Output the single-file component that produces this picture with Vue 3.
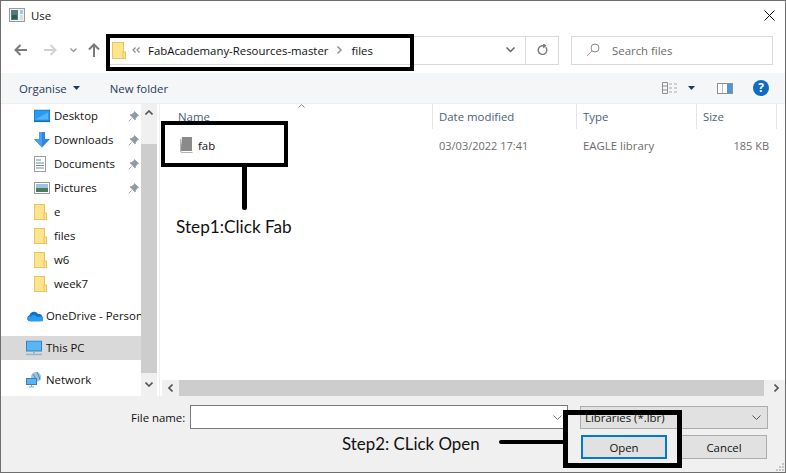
<script setup>
const places = [
  { name: 'Desktop', icon: 'desktop', pin: true },
  { name: 'Downloads', icon: 'down', pin: true },
  { name: 'Documents', icon: 'doc', pin: true },
  { name: 'Pictures', icon: 'pic', pin: true },
  { name: 'e', icon: 'folder' },
  { name: 'files', icon: 'folder' },
  { name: 'w6', icon: 'folder' },
  { name: 'week7', icon: 'folder' }
]
</script>

<template>
  <div class="win">
    <header class="title">
      <svg class="appicon" width="16" height="16" viewBox="0 0 16 16">
        <rect x="0.5" y="1.5" width="15" height="13" fill="#f2f2f2" stroke="#9a9a9a" />
        <rect x="2" y="3" width="7" height="10" fill="#4f7f78" />
        <rect x="3" y="8" width="5" height="4" fill="#2d5a52" />
        <rect x="11" y="3" width="3" height="4" fill="#a8c8d8" />
        <rect x="11" y="8" width="3" height="5" fill="#dcdcdc" />
      </svg>
      <span>Use</span>
      <svg class="close" width="11" height="11" viewBox="0 0 11 11">
        <path d="M0.5 0.5L10.5 10.5M10.5 0.5L0.5 10.5" stroke="#111" stroke-width="1" fill="none" />
      </svg>
    </header>

    <nav class="nav">
      <div class="navbtns">
        <svg width="13" height="12" viewBox="0 0 13 12"><path d="M13 6H2M6.5 1L1.5 6L6.5 11" fill="none" stroke="#7a7a7a" stroke-width="2" /></svg>
        <svg class="fwd" width="13" height="12" viewBox="0 0 13 12"><path d="M0 6H11M6.5 1L11.5 6L6.5 11" fill="none" stroke="#d2d2d2" stroke-width="2" /></svg>
        <svg class="hist" width="7" height="5" viewBox="0 0 7 5"><path d="M0.5 0.5L3.5 3.5L6.5 0.5" fill="none" stroke="#9a9a9a" stroke-width="1.4" /></svg>
        <svg class="up" width="12" height="14" viewBox="0 0 12 14"><path d="M6 14V2M1 6.5L6 1.5L11 6.5" fill="none" stroke="#7a7a7a" stroke-width="2" /></svg>
      </div>
      <div class="addr">
        <svg class="addrfolder" width="14" height="17" viewBox="0 0 14 17"><rect x="0.5" y="0.5" width="11" height="16" fill="#fde58f" stroke="#e8c65e" /><rect x="11" y="10" width="2.5" height="6.5" fill="#fde58f" stroke="#e8c65e" /></svg>
        <svg class="chev" width="8" height="6" viewBox="0 0 8 6"><path d="M3.5 0.5L1 3L3.5 5.5M7.5 0.5L5 3L7.5 5.5" fill="none" stroke="#8a8a8a" stroke-width="1.2" /></svg>
        <span class="crumb">FabAcademany-Resources-master</span>
        <svg class="sep" width="5" height="8" viewBox="0 0 5 8"><path d="M0.5 0.5L4 4L0.5 7.5" fill="none" stroke="#888" stroke-width="1.4" /></svg>
        <span class="crumb">files</span>
        <svg class="addrdrop" width="9" height="6" viewBox="0 0 9 6"><path d="M0.5 0.5L4.5 4.5L8.5 0.5" fill="none" stroke="#666" stroke-width="1.5" /></svg>
        <div class="refresh">
          <svg width="11" height="12" viewBox="0 0 11 12"><path d="M8.7 3.2A4.3 4.3 0 1 1 5 1.8H8M6.2 0L8.4 1.8L6.2 3.6" fill="none" stroke="#7a7a7a" stroke-width="1.4" /></svg>
        </div>
      </div>
      <div class="search">
        <svg width="14" height="14" viewBox="0 0 14 14"><circle cx="9" cy="5" r="4" fill="none" stroke="#8a8a8a" /><path d="M6 8L1 13" stroke="#b48a9a" /></svg>
        <span>Search files</span>
      </div>
    </nav>

    <div class="tools">
      <span class="tool">Organise</span>
      <svg class="caret" width="7" height="4" viewBox="0 0 7 4"><path d="M0 0H7L3.5 4Z" fill="#1e3a5f" /></svg>
      <span class="tool newf">New folder</span>
      <div class="toolright">
        <svg width="16" height="12" viewBox="0 0 16 12">
          <path d="M0.5 0.5H5.5V11.5H0.5Z M0.5 4H5.5 M0.5 8H5.5" fill="none" stroke="#8f8f8f" />
          <path d="M7 2H10M12 2H15M7 6H10M12 6H15M7 10H10M12 10H15" stroke="#a8a8a8" />
        </svg>
        <svg class="viewcaret" width="7" height="4" viewBox="0 0 7 4"><path d="M0 0H7L3.5 4Z" fill="#1e3a5f" /></svg>
        <svg class="pane" width="16" height="11" viewBox="0 0 16 11"><rect x="0.5" y="0.5" width="15" height="10" fill="#fff" stroke="#8f8f8f" /><rect x="10" y="1" width="5" height="9" fill="#4a97e0" /><path d="M5.5 1V10" stroke="#bbb" /></svg>
        <span class="help">?</span>
      </div>
    </div>

    <main class="body">
      <aside class="side">
        <ul class="places">
          <li v-for="p in places" :key="p.name" class="place">
            <svg v-if="p.icon === 'desktop'" width="16" height="13" viewBox="0 0 16 13"><rect x="0" y="0.5" width="16" height="11" fill="#2a9bf0" stroke="#0f74c8" /><path d="M1 10L14 3V10Z" fill="#54b5f7" /><rect x="0" y="11.5" width="16" height="1.2" fill="#1a6fb5" /></svg>
            <svg v-else-if="p.icon === 'down'" width="16" height="16" viewBox="0 0 16 16"><path d="M5 0H11V7H16L8 15.5L0 7H5Z" fill="#2f86e0" /><path d="M5 0H8V15.5L0 7H5Z" fill="#4aa0ee" /></svg>
            <svg v-else-if="p.icon === 'doc'" width="12" height="16" viewBox="0 0 12 16"><rect x="0.5" y="0.5" width="11" height="15" fill="#fff" stroke="#9a9a9a" /><path d="M2 4H7M2 7H10M2 9.5H10M2 12H10" stroke="#6d8fb0" /></svg>
            <svg v-else-if="p.icon === 'pic'" width="16" height="12" viewBox="0 0 16 12"><rect x="0.5" y="0.5" width="15" height="11" fill="#fff" stroke="#9a9a9a" /><rect x="2" y="2" width="12" height="4" fill="#9cc4de" /><rect x="2" y="6" width="12" height="4" fill="#4f7a5e" /></svg>
            <svg v-else width="13" height="16" viewBox="0 0 13 16"><rect x="0.5" y="0.5" width="10" height="15" fill="#fde58f" stroke="#e8c65e" /><rect x="10" y="9" width="2.5" height="6.5" fill="#fde58f" stroke="#e8c65e" /></svg>
            <span class="pname">{{ p.name }}</span>
            <svg v-if="p.pin" class="pin" width="11" height="11" viewBox="0 0 11 11"><path d="M6.5 0.5L10.5 4.5L9 5L7.5 7.5L7.2 9L2 3.8L3.5 3.5L6 2Z M3.5 7.5L0.5 10.5" fill="#8f9aa3" stroke="#8f9aa3" stroke-width="0.8" /></svg>
          </li>
          <li class="place top sys">
            <svg width="17" height="11" viewBox="0 0 17 11"><path d="M4 11A3.2 3.2 0 0 1 3.5 4.8A4.6 4.6 0 0 1 12 3.5A3.8 3.8 0 0 1 13.5 11Z" fill="#0f72c6" /><path d="M1 9A3 3 0 0 1 5 6A3.5 3.5 0 0 1 11 6.5H13.5A2.4 2.4 0 0 1 16 11H4Z" fill="#2a9bf0" /></svg>
            <span class="pname">OneDrive - Personal</span>
          </li>
          <li class="place pc sys">
            <svg width="16" height="15" viewBox="0 0 16 15"><rect x="0.5" y="0.5" width="15" height="10" fill="#54b8f8" stroke="#3d7fb0" /><path d="M7 11H9V13H7Z" fill="#9bb0c0" /><path d="M0 14H16" stroke="#9bb0c0" stroke-width="1.4" /></svg>
            <span class="pname">This PC</span>
          </li>
          <li class="place net sys">
            <svg width="16" height="16" viewBox="0 0 16 16"><circle cx="10" cy="5" r="5" fill="#9cc4de" /><path d="M7 2Q10 5 9 9M11 0Q13 4 14 8" stroke="#4f86b0" fill="none" /><rect x="0.5" y="6.5" width="10" height="6" fill="#54b8f8" stroke="#3d7fb0" /><path d="M3 15H8M5.5 13V15" stroke="#8ea8bc" /></svg>
            <span class="pname">Network</span>
          </li>
        </ul>
        <div class="vbar">
          <svg class="arrow" width="8" height="5" viewBox="0 0 8 5"><path d="M0.5 4.5L4 1L7.5 4.5" fill="none" stroke="#555" stroke-width="1.6" /></svg>
          <div class="vthumb"></div>
          <svg class="arrow" width="8" height="5" viewBox="0 0 8 5"><path d="M0.5 0.5L4 4L7.5 0.5" fill="none" stroke="#555" stroke-width="1.6" /></svg>
        </div>
      </aside>

      <section class="list">
        <div class="heads">
          <div class="head h1">Name
            <svg class="sort" width="7" height="4" viewBox="0 0 7 4"><path d="M0.5 3.5L3.5 0.5L6.5 3.5" fill="none" stroke="#888" /></svg>
          </div>
          <div class="head h2">Date modified</div>
          <div class="head h3">Type</div>
          <div class="head h4">Size</div>
        </div>
        <div class="row">
          <div class="cell h1 fname">
            <svg width="13" height="16" viewBox="0 0 13 16"><path d="M2 0H12V14H2Q0.5 14 0.5 15Z" fill="#8a8a8a" /><path d="M0.5 2V14.5Q0.5 15.5 2 15.5H12.5" fill="none" stroke="#b5b5b5" /></svg>
            <span>fab</span>
          </div>
          <div class="cell h2 muted num">03/03/2022 17:41</div>
          <div class="cell h3 muted">EAGLE library</div>
          <div class="cell h4 muted right num">185 KB</div>
        </div>
        <div class="spacer"></div>
        <div class="hbar">
          <svg class="harrow" width="5" height="8" viewBox="0 0 5 8"><path d="M4.5 0.5L1 4L4.5 7.5" fill="none" stroke="#555" stroke-width="1.6" /></svg>
          <div class="hthumb"></div>
          <svg class="harrow" width="5" height="8" viewBox="0 0 5 8"><path d="M0.5 0.5L4 4L0.5 7.5" fill="none" stroke="#555" stroke-width="1.6" /></svg>
        </div>
      </section>
    </main>

    <footer class="foot">
      <div class="frow">
        <label class="flabel">File name:</label>
        <div class="finput">
          <svg width="9" height="5" viewBox="0 0 9 5"><path d="M0.5 0.5L4.5 4.5L8.5 0.5" fill="none" stroke="#777" /></svg>
        </div>
        <div class="filter">
          <span>Libraries (*.lbr)</span>
          <svg width="9" height="5" viewBox="0 0 9 5"><path d="M0.5 0.5L4.5 4.5L8.5 0.5" fill="none" stroke="#555" /></svg>
        </div>
      </div>
      <div class="brow">
        <button class="btn primary">Open</button>
        <button class="btn">Cancel</button>
      </div>
      <svg class="grip" width="9" height="9" viewBox="0 0 9 9"><path d="M7 1h2v2H7zM4 4h2v2H4zM7 4h2v2H7zM1 7h2v2H1zM4 7h2v2H4zM7 7h2v2H7z" fill="#c4c4c4" /></svg>
    </footer>

    <div class="mark m-addr"></div>
    <div class="mark m-fab"></div>
    <div class="stem"></div>
    <div class="note n1">Step1:Click Fab</div>
    <div class="note n2">Step2: CLick Open</div>
    <div class="link"></div>
    <div class="mark m-open"></div>
  </div>
</template>

<style scoped>
.win {
  position: relative;
  width: 786px;
  height: 473px;
  box-sizing: border-box;
  border: 1px solid #6e6e6e;
  background: #fff;
  font: 11.4px "Open Sans", "Noto Sans", sans-serif;
  color: #111;
  display: flex;
  flex-direction: column;
  overflow: hidden;
}
.title {
  height: 28px;
  flex: none;
  display: flex;
  align-items: center;
  padding-left: 8px;
  gap: 6px;
}
.close { margin-left: auto; margin-right: 10px; }
.nav {
  height: 44px;
  flex: none;
  display: flex;
  align-items: center;
  padding-bottom: 2px;
  box-sizing: border-box;
}
.navbtns {
  width: 106px;
  flex: none;
  display: flex;
  align-items: center;
  padding-left: 13px;
  box-sizing: border-box;
}
.fwd { margin-left: 17px; }
.hist { margin-left: 13px; }
.up { margin-left: 11px; }
.addr {
  width: 453px;
  height: 29px;
  box-sizing: border-box;
  border: 1px solid #d9d9d9;
  flex: none;
  margin-left: -1px;
  display: flex;
  align-items: center;
  padding-left: 5px;
}
.addrfolder { flex: none; }
.chev { margin-left: 6px; flex: none; }
.crumb { margin-left: 8px; }
.sep { margin-left: 9px; margin-right: 1px; }
.addrdrop { margin-left: auto; margin-right: 10px; }
.refresh {
  width: 32px;
  height: 27px;
  border-left: 1px solid #d9d9d9;
  display: flex;
  align-items: center;
  justify-content: center;
  flex: none;
}
.search {
  width: 202px;
  height: 29px;
  margin-left: 12px;
  box-sizing: border-box;
  border: 1px solid #d9d9d9;
  display: flex;
  align-items: center;
  padding-left: 14px;
  gap: 12px;
  color: #6d6d6d;
}
.tools {
  height: 30px;
  flex: none;
  background: #f5f6f7;
  border-bottom: 1px solid #eeeeee;
  box-sizing: content-box;
  display: flex;
  align-items: center;
  padding-left: 18px;
  color: #1e3a5f;
}
.caret { margin-left: 6px; }
.newf { margin-left: 30px; }
.toolright {
  margin-left: auto;
  display: flex;
  align-items: center;
  padding-right: 16px;
}
.viewcaret { margin-left: 10px; }
.pane { margin-left: 22px; }
.help {
  width: 16px;
  height: 16px;
  margin-left: 20px;
  border-radius: 50%;
  background: #0f6cc4;
  color: #fff;
  font-weight: 700;
  font-size: 12px;
  line-height: 16px;
  text-align: center;
}
.body {
  flex: 1;
  min-height: 0;
  display: flex;
}
.side {
  width: 159px;
  flex: none;
  display: flex;
  border-right: 1px solid #f0f0f0;
  box-sizing: border-box;
}
.places {
  list-style: none;
  margin: 0;
  padding: 0;
  width: 140px;
  flex: none;
  overflow: hidden;
}
.place {
  height: 24px;
  display: flex;
  align-items: center;
  padding-left: 32px;
  padding-bottom: 1px;
  width: 140px;
  box-sizing: border-box;
  position: relative;
  white-space: nowrap;
  overflow: hidden;
}
.place svg:first-child { position: absolute; left: 33px; top: 50%; transform: translateY(-50%); }
.pname { margin-left: 21px; }
.sys { padding-left: 24px; }
.sys svg:first-child { left: 25px; }
.top { margin-top: 8px; }
.pc { margin-top: 8px; background: #d9d9d9; }
.net { margin-top: 8px; }
.pin { position: absolute; right: 2px; top: 7px; }
.vbar {
  width: 16px;
  flex: none;
  background: #f0f0f0;
  display: flex;
  flex-direction: column;
  align-items: center;
}
.arrow { flex: none; margin: 9px 0; }
.vthumb {
  flex: 1;
  width: 100%;
  background: #cdcdcd;
  margin-top: 20px;
}
.vbar .arrow:first-child { margin-top: 6px; }
.list {
  flex: 1;
  min-width: 0;
  display: flex;
  flex-direction: column;
}
.heads, .row {
  display: grid;
  grid-template-columns: 272px 144px 120px 80px;
  padding-left: 1px;
}
.heads { height: 25px; color: #4c607a; flex: none; }
.head {
  border-right: 1px solid #e5e5e5;
  padding-left: 6px;
  display: flex;
  align-items: center;
  position: relative;
}
.head.h1 { padding-left: 17px; }
.sort { position: absolute; left: 137px; top: 0; }
.row { height: 32px; flex: none; }
.cell { display: flex; align-items: center; padding-left: 6px; }
.fname { gap: 5px; padding-left: 19px; }
.muted { color: #6d6d6d; }
.num { font-size: 11px; }
.right { justify-content: flex-end; padding-right: 8px; }
.spacer { flex: 1; }
.hbar {
  height: 16px;
  flex: none;
  margin-left: 2px;
  background: #f0f0f0;
  display: flex;
  align-items: center;
  padding: 0 6px 0 6px;
  gap: 6px;
}
.harrow { flex: none; }
.hthumb {
  flex: 1;
  height: 16px;
  background: #cdcdcd;
  margin-right: 4px;
}
.foot {
  height: 76px;
  flex: none;
  background: #f0f0f0;
  position: relative;
  box-sizing: border-box;
  padding-top: 9px;
}
.frow { display: flex; align-items: center; height: 24px; }
.flabel { margin-left: 130px; width: 59px; }
.finput {
  width: 378px;
  height: 24px;
  box-sizing: border-box;
  background: #fff;
  border: 1px solid #7a7a7a;
  display: flex;
  align-items: center;
  justify-content: flex-end;
  padding-right: 5px;
}
.filter {
  width: 188px;
  height: 23px;
  margin-left: 12px;
  box-sizing: border-box;
  background: #e1e1e1;
  border: 1px solid #adadad;
  display: flex;
  align-items: center;
  justify-content: space-between;
  padding: 0 6px 0 4px;
}
.brow {
  display: flex;
  justify-content: flex-end;
  gap: 14px;
  margin-top: 6px;
  padding-right: 18px;
}
.btn {
  width: 86px;
  height: 24px;
  box-sizing: border-box;
  background: #e1e1e1;
  border: 1px solid #adadad;
  font: inherit;
  color: #111;
  padding: 0;
}
.primary { border: 2px solid #0078d7; }
.grip { position: absolute; right: 1px; bottom: 1px; }

.mark { position: absolute; box-sizing: border-box; border: 4px solid #000; }
.m-addr { left: 105px; top: 33px; width: 308px; height: 37px; }
.m-fab { left: 160px; top: 120px; width: 127px; height: 46px; }
.stem { position: absolute; left: 241px; top: 165px; width: 5px; height: 44px; background: #000; border-radius: 0 0 2px 2px; }
.note { position: absolute; font-family: Lato, "Open Sans", sans-serif; color: #111; white-space: nowrap; line-height: 22px; }
.n1 { left: 175px; top: 215px; font-size: 17.2px; }
.n2 { left: 341px; top: 432px; font-size: 16.9px; }
.link { position: absolute; left: 498px; top: 439px; width: 66px; height: 4px; background: #000; border-radius: 2px; }
.m-open { left: 562px; top: 409px; width: 119px; height: 58px; border-width: 5px; }
</style>
